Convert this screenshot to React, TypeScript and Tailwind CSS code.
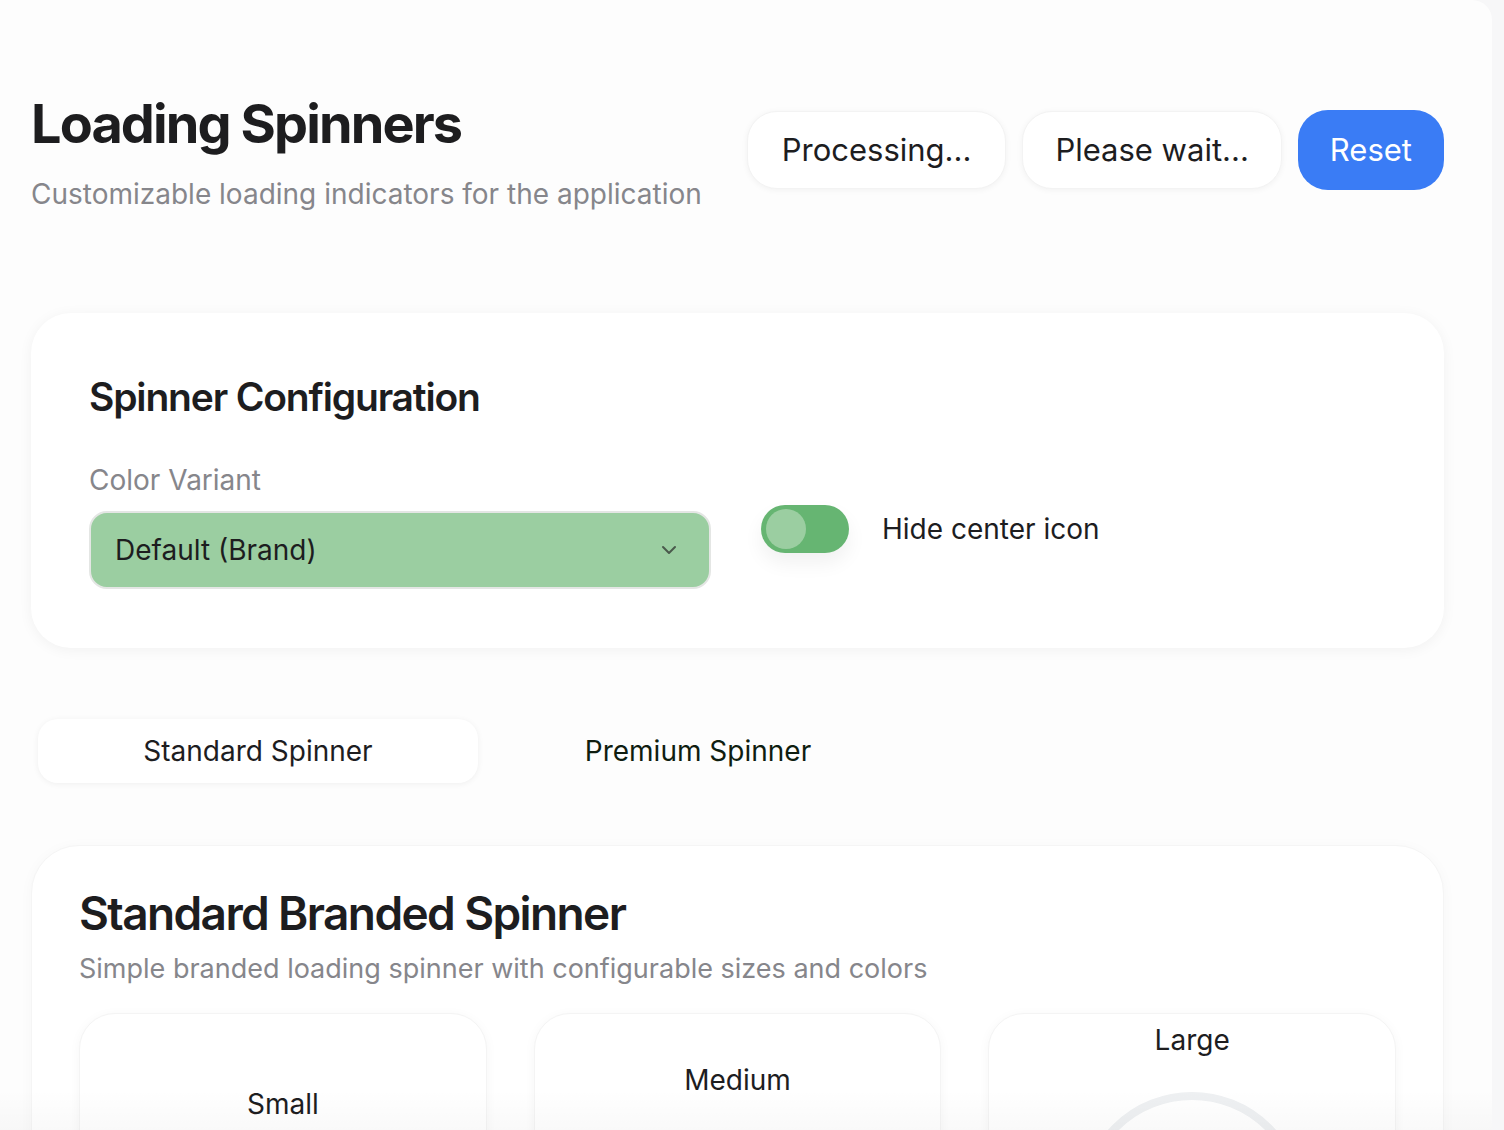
import React from 'react';
import { ChevronDown } from 'lucide-react';

const sizes = [
  { label: 'Small', px: 96 },
  { label: 'Medium', px: 144 },
  { label: 'Large', px: 224 },
];

const Spinner: React.FC<{ size: number }> = ({ size }) => {
  const stroke = size / 28;
  const r = size / 2 - stroke / 2;
  const c = 2 * Math.PI * r;
  return (
    <svg width={size} height={size} viewBox={`0 0 ${size} ${size}`} className="shrink-0">
      <circle cx={size / 2} cy={size / 2} r={r} fill="none" stroke="#eef0f2" strokeWidth={stroke} />
      <circle
        cx={size / 2}
        cy={size / 2}
        r={r}
        fill="none"
        stroke="#66b572"
        strokeWidth={stroke}
        strokeLinecap="round"
        strokeDasharray={`${c * 0.25} ${c}`}
        transform={`rotate(20 ${size / 2} ${size / 2})`}
      />
    </svg>
  );
};

export default function App() {
  return (
    <div className="flex min-h-screen bg-[#f7f7f8] font-['Inter',sans-serif] text-[#1d1d1f] overflow-hidden">
      <div className="w-[1492px] h-[1130px] shrink-0 bg-[#fdfdfd] rounded-tr-[20px] overflow-hidden relative">
        <div className="pl-[31px] pr-[48px] pt-[90px]">
          {/* Header */}
          <div className="flex items-center justify-between">
            <div>
              <h1 className="text-[54px] leading-[67px] font-bold tracking-[-0.035em]">Loading Spinners</h1>
              <p className="mt-[17px] text-[28px] leading-[40px] text-[#86868b]">
                Customizable loading indicators for the application
              </p>
            </div>
            <div className="flex items-center gap-4 -mt-[4px]">
              <button className="h-[78px] px-[34px] rounded-[30px] bg-white text-[31px] shadow-[0_1px_6px_rgba(0,0,0,0.05)] border border-[#f3f3f3]">
                Processing...
              </button>
              <button className="h-[78px] px-[32px] rounded-[30px] bg-white text-[31px] shadow-[0_1px_6px_rgba(0,0,0,0.05)] border border-[#f3f3f3]">
                Please wait...
              </button>
              <button className="h-[80px] px-[32px] rounded-[30px] bg-[#3a7cf5] text-white text-[31px]">
                Reset
              </button>
            </div>
          </div>

          {/* Configuration */}
          <div className="mt-[99px] bg-white rounded-[40px] shadow-[0_2px_14px_rgba(0,0,0,0.05)] px-[58px] pt-[59px] pb-[59px]">
            <h2 className="text-[39px] leading-[50px] font-semibold tracking-[-0.03em]">Spinner Configuration</h2>
            <div className="mt-[40px] flex items-center gap-[50px]">
              <div>
                <div className="text-[28px] leading-[36px] text-[#86868b]">Color Variant</div>
                <div className="mt-[13px] w-[622px] h-[78px] rounded-[18px] bg-[#9bcea1] border-2 border-[#e4e6e4] flex items-center justify-between pl-[24px] pr-[28px]">
                  <span className="text-[28px]">Default (Brand)</span>
                  <ChevronDown size={24} strokeWidth={2} className="text-[#4a5a4c]" />
                </div>
              </div>
              <div className="flex items-center gap-[33px] mt-[6px]">
                <div className="w-[88px] h-[48px] rounded-full bg-[#66b572] flex items-center pl-[5px] shadow-[0_10px_20px_rgba(0,0,0,0.06)]">
                  <div className="w-[40px] h-[40px] rounded-full bg-[#9bcea1]" />
                </div>
                <span className="text-[28px]">Hide center icon</span>
              </div>
            </div>
          </div>

          {/* Tabs */}
          <div className="mt-[64px] w-[894px] p-[7px] grid grid-cols-2">
            <button className="h-[64px] rounded-[20px] bg-white shadow-[0_1px_6px_rgba(0,0,0,0.06)] text-[28px]">
              Standard Spinner
            </button>
            <button className="h-[64px] rounded-[20px] text-[28px] text-[#0f1d10]">Premium Spinner</button>
          </div>

          {/* Standard section */}
          <div className="mt-[55px] bg-white rounded-[48px] border border-[#f5f5f5] shadow-[0_2px_14px_rgba(0,0,0,0.03)] px-[47px] pt-[39px] pb-[48px]">
            <h2 className="text-[46px] leading-[56px] font-semibold tracking-[-0.035em]">Standard Branded Spinner</h2>
            <p className="mt-[8px] text-[27px] leading-[40px] text-[#86868b]">
              Simple branded loading spinner with configurable sizes and colors
            </p>
            <div className="mt-[24px] grid grid-cols-3 gap-[47px]">
              {sizes.map((s) => (
                <div
                  key={s.label}
                  className="rounded-[36px] bg-white border border-[#f4f4f4] shadow-[0_2px_12px_rgba(0,0,0,0.04)] pt-[6px] pb-2 flex flex-col items-center justify-center gap-[32px]"
                >
                  <div className="text-[28px] leading-[40px]">{s.label}</div>
                  <Spinner size={s.px} />
                </div>
              ))}
            </div>
          </div>
        </div>
        <div className="absolute left-0 right-0 bottom-0 h-[40px] bg-gradient-to-b from-transparent to-[rgba(0,0,0,0.025)] pointer-events-none" />
      </div>
    </div>
  );
}
